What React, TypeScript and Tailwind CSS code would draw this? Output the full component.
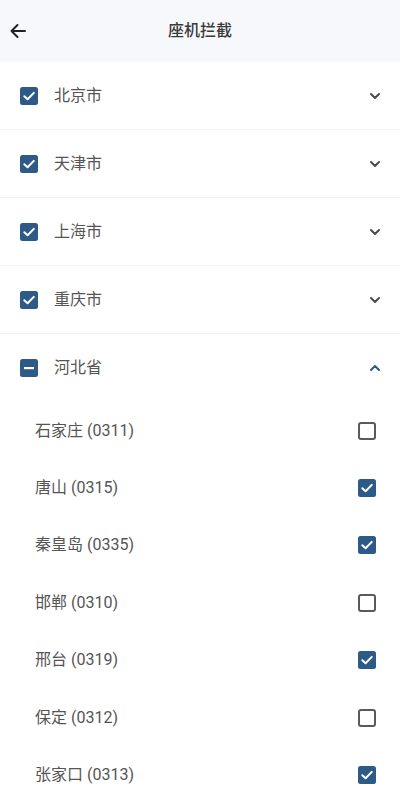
import React from "react";

const BLUE = "#2e5a88";

function CheckOn({ size = 18 }: { size?: number }) {
  return (
    <svg width={size} height={size} viewBox="0 0 18 18">
      <rect x="0" y="0" width="18" height="18" rx="2.5" fill={BLUE} />
      <path d="M4.3 9.2 L7.6 12.3 L13.8 5.9" fill="none" stroke="#fff" strokeWidth="2" strokeLinecap="round" strokeLinejoin="round" />
    </svg>
  );
}
function CheckOff({ size = 18 }: { size?: number }) {
  return (
    <svg width={size} height={size} viewBox="0 0 18 18">
      <rect x="1" y="1" width="16" height="16" rx="2" fill="none" stroke="#5a5a5a" strokeWidth="2" />
    </svg>
  );
}
function CheckMixed() {
  return (
    <svg width={18} height={18} viewBox="0 0 18 18">
      <rect x="0" y="0" width="18" height="18" rx="2.5" fill={BLUE} />
      <rect x="4" y="8" width="10" height="2.2" fill="#fff" />
    </svg>
  );
}
function Chevron({ up }: { up?: boolean }) {
  return (
    <svg width="14" height="14" viewBox="0 0 14 14">
      {up ? (
        <path d="M3 9 L7 5 L11 9" fill="none" stroke={BLUE} strokeWidth="2" strokeLinecap="round" strokeLinejoin="round" />
      ) : (
        <path d="M3 5 L7 9 L11 5" fill="none" stroke="#4a4a4a" strokeWidth="2" strokeLinecap="round" strokeLinejoin="round" />
      )}
    </svg>
  );
}

const provinces = ["北京市", "天津市", "上海市", "重庆市"];
const cities: [string, boolean][] = [
  ["石家庄 (0311)", false],
  ["唐山 (0315)", true],
  ["秦皇岛 (0335)", true],
  ["邯郸 (0310)", false],
  ["邢台 (0319)", true],
  ["保定 (0312)", false],
  ["张家口 (0313)", true],
];

export default function App() {
  return (
    <div
      className="w-[400px] h-[803px] overflow-hidden bg-white"
      style={{ fontFamily: 'Roboto, "Noto Sans CJK SC", "Noto Sans", sans-serif' }}
    >
      <div className="h-[62px] bg-[#f7f8fc] flex items-center relative">
        <div className="pl-[8px] flex items-center">
          <svg width="20" height="20" viewBox="0 0 20 20">
            <path d="M17 10 H3.5 M9.5 4 L3.5 10 L9.5 16" fill="none" stroke="#222" strokeWidth="2" strokeLinecap="round" strokeLinejoin="round" />
          </svg>
        </div>
        <div className="absolute left-0 right-0 top-0 h-[62px] flex items-center justify-center text-[16px] text-[#3a3a3a] font-medium pointer-events-none">
          座机拦截
        </div>
      </div>
      {provinces.map((p) => (
        <div key={p} className="h-[68px] flex items-center border-b border-[#f3f3f3] pl-[20px] pr-[18px]">
          <CheckOn />
          <span className="ml-[16px] text-[16px] text-[#555] flex-1">{p}</span>
          <Chevron />
        </div>
      ))}
      <div className="h-[68px] flex items-center pl-[20px] pr-[18px]">
        <CheckMixed />
        <span className="ml-[16px] text-[16px] text-[#555] flex-1">河北省</span>
        <Chevron up />
      </div>
      {cities.map(([c, on]) => (
        <div key={c} className="h-[57.4px] flex items-center pl-[35px] pr-[24px]">
          <span className="text-[16px] text-[#555] flex-1">{c}</span>
          {on ? <CheckOn /> : <CheckOff />}
        </div>
      ))}
    </div>
  );
}
